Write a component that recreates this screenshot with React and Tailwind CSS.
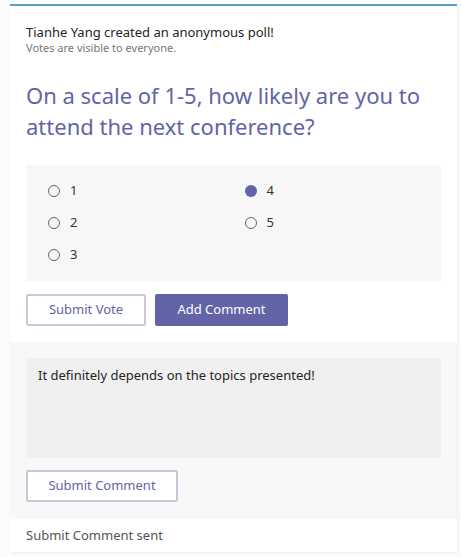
import React from "react";

function Radio({ checked, label }) {
  return (
    <div className="flex items-center h-[32px]">
      {checked ? (
        <span className="w-[12px] h-[12px] rounded-full bg-[#6264a7]" />
      ) : (
        <span className="w-[12px] h-[12px] rounded-full border border-[#666]" />
      )}
      <span className="ml-[10px] text-[13px] text-[#333]">{label}</span>
    </div>
  );
}

export default function App() {
  return (
    <div className="w-[461px] h-[557px] bg-[#fcfafa] pt-[4px] pl-[10px] pr-[4px]" style={{ fontFamily: '"Noto Sans", "Open Sans", sans-serif' }}>
      <div className="w-[447px] bg-white border-t-2 border-[#5aa0cc] shadow-[1px_1px_2px_rgba(0,0,0,0.06)]">
        <div className="px-[16px] pt-[17px] pb-[16px]">
          <div className="text-[13px] leading-[18px] text-[#252423]">Tianhe Yang created an anonymous poll!</div>
          <div className="text-[11px] leading-[14px] text-[#777]">Votes are visible to everyone.</div>
          <div className="mt-[25px] text-[22px] leading-[31px] text-[#6264a7]">
            On a scale of 1-5, how likely are you to attend the next conference?
          </div>
          <div className="mt-[23px] bg-[#f7f7f7] pl-[22px] pt-[10px] pb-[10px] grid grid-cols-2">
            <div className="flex flex-col">
              <Radio label="1" />
              <Radio label="2" />
              <Radio label="3" />
            </div>
            <div className="flex flex-col">
              <Radio label="4" checked />
              <Radio label="5" />
            </div>
          </div>
          <div className="mt-[13px] flex gap-[9px]">
            <button className="w-[120px] h-[32px] border-2 border-[#c8c8da] rounded-[2px] bg-white text-[13px] text-[#6264a7]">Submit Vote</button>
            <button className="w-[133px] h-[32px] rounded-[2px] bg-[#6264a7] text-[13px] text-white">Add Comment</button>
          </div>
        </div>
        <div className="bg-[#f8f8f8] px-[16px] pt-[16px] pb-[17px]">
          <div className="h-[100px] bg-[#f0f0f0] px-[12px] pt-[8px] text-[13px] text-[#252423]">
            It definitely depends on the topics presented!
          </div>
          <button className="mt-[12px] w-[152px] h-[32px] border-2 border-[#c8c8da] rounded-[2px] bg-white text-[13px] text-[#6264a7]">Submit Comment</button>
        </div>
        <div className="px-[16px] h-[33px] flex items-center text-[13px] text-[#555]">Submit Comment sent</div>
      </div>
    </div>
  );
}
